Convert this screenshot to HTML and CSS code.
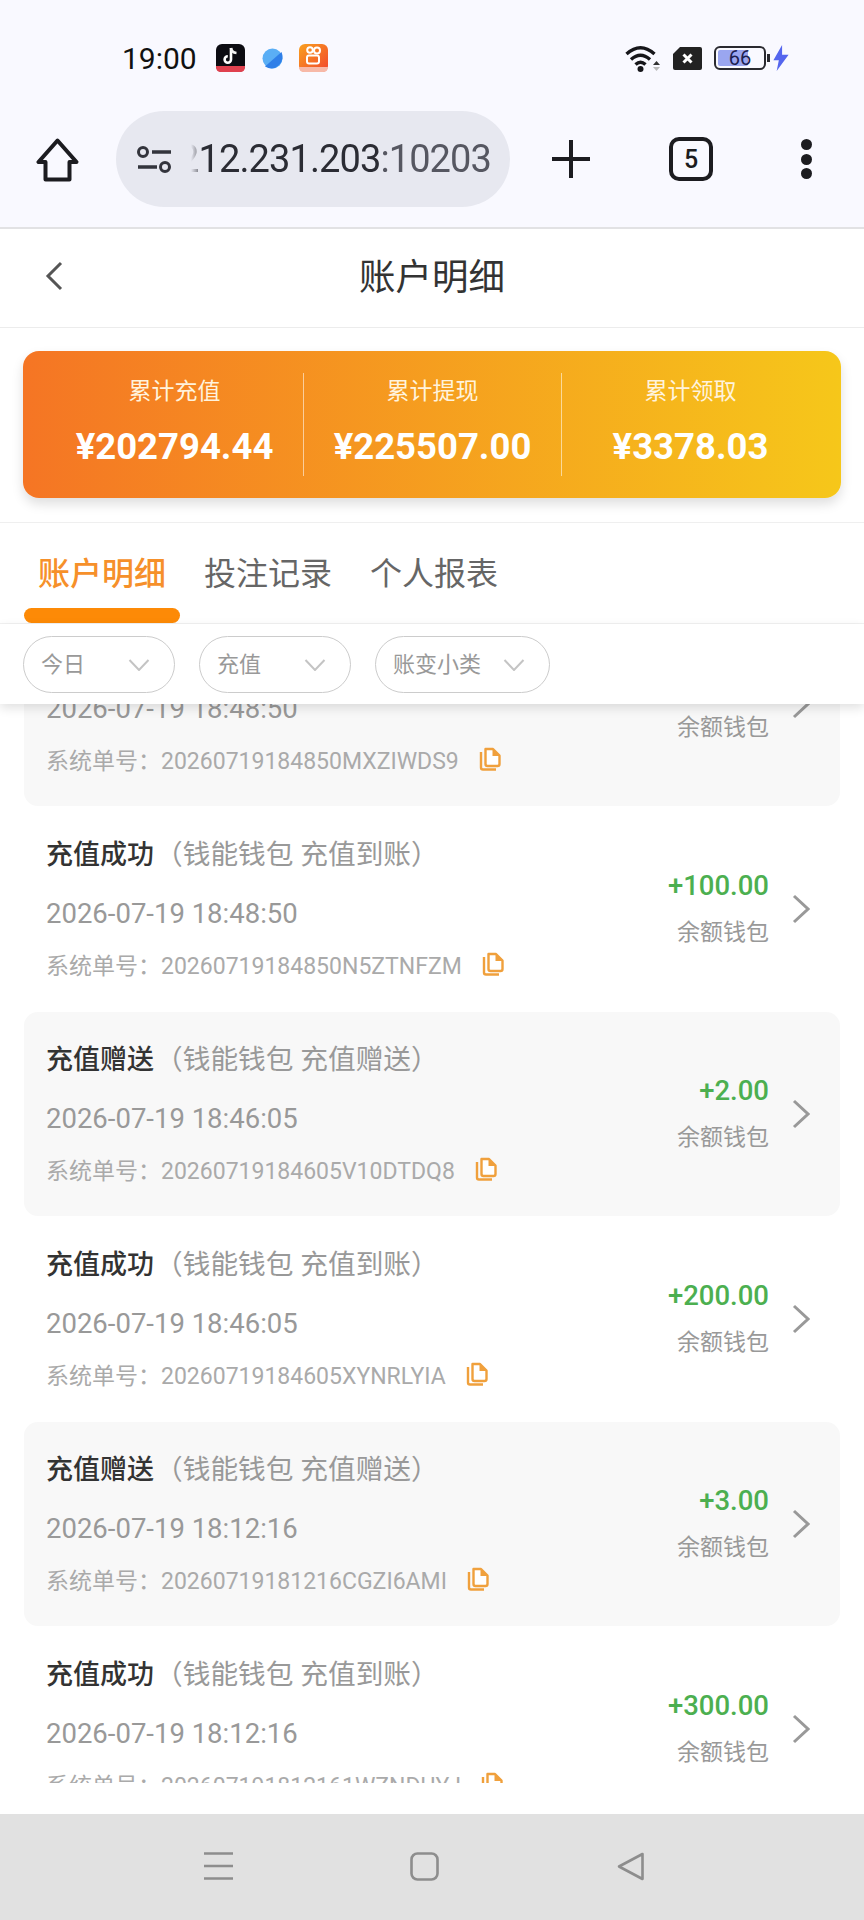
FILE: index.html
```html
<!DOCTYPE html>
<html lang="zh-CN">
<head>
<meta charset="UTF-8">
<meta name="viewport" content="width=device-width, initial-scale=1.0">
<title>账户明细</title>
<link rel="stylesheet" href="styles.css">
</head>
<body>
  <svg class="defs" width="0" height="0">
    <symbol id="copy" viewBox="0 0 22 24">
      <path d="M2 5v15.500q0 2 2 2h13" fill="none" stroke="#f0a03c" stroke-width="2.400"/>
      <path d="M6.500 2h7.500l6.500 6.500v8.500q0 2-2 2h-10q-2 0-2-2z" fill="#fff" stroke="#f0a03c" stroke-width="2.400" stroke-linejoin="round"/>
      <path d="M13.500 1.500v7.500h7.500z" fill="#f0a03c"/>
    </symbol>
    <symbol id="next" viewBox="0 0 18 30">
      <path d="M2 2l14 13L2 28" fill="none" stroke="#999" stroke-width="3"/>
    </symbol>
    <symbol id="drop" viewBox="0 0 22 12">
      <path d="M1.500 1l9.500 10 9.500-10" fill="none" stroke="#c4c4c4" stroke-width="2"/>
    </symbol>
  </svg>

  <div class="app">
    <div class="chrome">
      <div class="status">
        <span class="time">19:00</span>
        <svg class="app-tiktok" width="29" height="28" viewBox="0 0 29 28">
          <rect width="29" height="28" rx="6" fill="#0c0c12"/>
          <path d="M0 22h29v1q0 5-5 5H5q-5 0-5-5z" fill="#e0414f"/>
          <path d="M15 4v11.500a3.200 3.200 0 1 1-3.200-3.200" fill="none" stroke="#fff" stroke-width="2.600"/>
          <path d="M15 4q.5 4.500 5.500 5" fill="none" stroke="#f3f3f3" stroke-width="2.600"/>
        </svg>
        <svg class="app-sphere" width="21" height="21" viewBox="0 0 21 21">
          <circle cx="10.500" cy="10.500" r="10" fill="#5aaef5"/>
          <path d="M3 18.500L19.500 4q3 8-3 13.500t-13.500 1z" fill="#2f7fe8"/>
        </svg>
        <svg class="app-kwai" width="29" height="28" viewBox="0 0 29 28">
          <defs>
            <linearGradient id="kwai" x1="0" y1="0" x2="1" y2="1">
              <stop offset="0" stop-color="#f9a11f"/>
              <stop offset="1" stop-color="#f2452d"/>
            </linearGradient>
          </defs>
          <rect width="29" height="28" rx="6" fill="url(#kwai)"/>
          <circle cx="11" cy="6" r="2.800" fill="none" stroke="#fff" stroke-width="2"/>
          <circle cx="18" cy="6.500" r="3" fill="none" stroke="#fff" stroke-width="2"/>
          <rect x="8" y="11.500" width="12" height="8" rx="2" fill="none" stroke="#fff" stroke-width="2"/>
          <path d="M0 23h29q0 5-5 5H5q-5 0-5-5z" fill="#f7b9a8"/>
        </svg>
        <div class="status-right">
          <svg width="36" height="27" viewBox="0 0 36 27">
            <path d="M1.500 9q14-12.500 28 0M6 14.500q9.500-8.500 19 0M10.500 19.500q5-4.500 10 0" fill="none" stroke="#16161a" stroke-width="3.400"/>
            <circle cx="15.500" cy="24" r="3" fill="#16161a"/>
            <path d="M28 20l3.500-4 3.500 4z" fill="#333"/>
            <path d="M28 22l3.500 4 3.500-4z" fill="#bbb"/>
          </svg>
          <svg width="29" height="23" viewBox="0 0 29 23">
            <path d="M7 0h20q2 0 2 2v19q0 2-2 2H2q-2 0-2-2V7z" fill="#222"/>
            <path d="M10.500 7.500l8 8m0-8l-8 8" stroke="#fff" stroke-width="3"/>
          </svg>
          <div class="battery">
            <span class="battery-level"></span>
            <span class="battery-num">66</span>
          </div>
          <svg class="bolt" width="18" height="26" viewBox="0 0 16 24">
            <path d="M9 0L1 14h5l-2 10 11-15H9z" fill="#5566ee"/>
          </svg>
        </div>
      </div>
      <div class="toolbar">
        <svg class="tool-home" width="43" height="44" viewBox="0 0 43 44">
          <path d="M21.500 2.500L2.500 24h7v17.500h24V24h7z" fill="none" stroke="#1c1c20" stroke-width="4" stroke-linejoin="round"/>
        </svg>
        <div class="address">
          <svg width="37" height="29" viewBox="0 0 37 29">
            <circle cx="7" cy="7" r="4.500" fill="none" stroke="#33343c" stroke-width="3"/>
            <path d="M16 7h19M2 22h19" stroke="#33343c" stroke-width="3.500"/>
            <circle cx="29" cy="22" r="4.500" fill="none" stroke="#33343c" stroke-width="3"/>
          </svg>
          <div class="url"><span class="url-host">212.231.203</span><span class="url-port">:10203</span></div>
        </div>
        <svg class="tool-plus" width="38" height="38" viewBox="0 0 38 38">
          <path d="M19 0v38M0 19h38" stroke="#1c1c20" stroke-width="4"/>
        </svg>
        <div class="tabcount">5</div>
        <div class="dots"><i></i><i></i><i></i></div>
      </div>
    </div>

    <div class="header">
      <svg class="back" width="18" height="30" viewBox="0 0 18 30">
        <path d="M16 2L3 15l13 13" fill="none" stroke="#555" stroke-width="3"/>
      </svg>
      <h1>账户明细</h1>
    </div>

    <div class="summary-wrap">
      <div class="summary">
        <div class="stat">
          <span class="stat-label">累计充值</span>
          <span class="stat-value">¥202794.44</span>
        </div>
        <div class="stat">
          <span class="stat-label">累计提现</span>
          <span class="stat-value">¥225507.00</span>
        </div>
        <div class="stat">
          <span class="stat-label">累计领取</span>
          <span class="stat-value">¥3378.03</span>
        </div>
      </div>
    </div>

    <div class="tabs">
      <div class="tab active"><span class="tab-label">账户明细</span><span class="tab-bar"></span></div>
      <div class="tab"><span class="tab-label">投注记录</span><span class="tab-bar"></span></div>
      <div class="tab"><span class="tab-label">个人报表</span><span class="tab-bar"></span></div>
    </div>

    <div class="filters">
      <div class="pill"><span>今日</span><svg width="22" height="12"><use href="#drop"/></svg></div>
      <div class="pill"><span>充值</span><svg width="22" height="12"><use href="#drop"/></svg></div>
      <div class="pill"><span>账变小类</span><svg width="22" height="12"><use href="#drop"/></svg></div>
    </div>

    <div class="list">
      <!-- scrolled row: its title and amount are out of view behind the filters -->
      <div class="row grey first">
        <div class="row-main">
          <div class="row-date">2026-07-19 18:48:50</div>
          <div class="row-no">系统单号：20260719184850MXZIWDS9<svg width="22" height="24"><use href="#copy"/></svg></div>
        </div>
        <div class="row-side"><span class="wallet">余额钱包</span></div>
        <svg class="row-next" width="18" height="30"><use href="#next"/></svg>
      </div>
      <div class="row">
        <div class="row-main">
          <div class="row-title"><b>充值成功</b><span class="row-sub">（钱能钱包 充值到账）</span></div>
          <div class="row-date">2026-07-19 18:48:50</div>
          <div class="row-no">系统单号：20260719184850N5ZTNFZM<svg width="22" height="24"><use href="#copy"/></svg></div>
        </div>
        <div class="row-side"><span class="amount">+100.00</span><span class="wallet">余额钱包</span></div>
        <svg class="row-next" width="18" height="30"><use href="#next"/></svg>
      </div>
      <div class="row grey">
        <div class="row-main">
          <div class="row-title"><b>充值赠送</b><span class="row-sub">（钱能钱包 充值赠送）</span></div>
          <div class="row-date">2026-07-19 18:46:05</div>
          <div class="row-no">系统单号：20260719184605V10DTDQ8<svg width="22" height="24"><use href="#copy"/></svg></div>
        </div>
        <div class="row-side"><span class="amount">+2.00</span><span class="wallet">余额钱包</span></div>
        <svg class="row-next" width="18" height="30"><use href="#next"/></svg>
      </div>
      <div class="row">
        <div class="row-main">
          <div class="row-title"><b>充值成功</b><span class="row-sub">（钱能钱包 充值到账）</span></div>
          <div class="row-date">2026-07-19 18:46:05</div>
          <div class="row-no">系统单号：20260719184605XYNRLYIA<svg width="22" height="24"><use href="#copy"/></svg></div>
        </div>
        <div class="row-side"><span class="amount">+200.00</span><span class="wallet">余额钱包</span></div>
        <svg class="row-next" width="18" height="30"><use href="#next"/></svg>
      </div>
      <div class="row grey">
        <div class="row-main">
          <div class="row-title"><b>充值赠送</b><span class="row-sub">（钱能钱包 充值赠送）</span></div>
          <div class="row-date">2026-07-19 18:12:16</div>
          <div class="row-no">系统单号：20260719181216CGZI6AMI<svg width="22" height="24"><use href="#copy"/></svg></div>
        </div>
        <div class="row-side"><span class="amount">+3.00</span><span class="wallet">余额钱包</span></div>
        <svg class="row-next" width="18" height="30"><use href="#next"/></svg>
      </div>
      <div class="row">
        <div class="row-main">
          <div class="row-title"><b>充值成功</b><span class="row-sub">（钱能钱包 充值到账）</span></div>
          <div class="row-date">2026-07-19 18:12:16</div>
          <div class="row-no">系统单号：202607191812161WZNDUYJ<svg width="22" height="24"><use href="#copy"/></svg></div>
        </div>
        <div class="row-side"><span class="amount">+300.00</span><span class="wallet">余额钱包</span></div>
        <svg class="row-next" width="18" height="30"><use href="#next"/></svg>
      </div>
    </div>

    <div class="navbar">
      <svg width="29" height="28" viewBox="0 0 29 28">
        <path d="M0 1.500h29M0 14h29M0 26.500h29" stroke="#8d8d8d" stroke-width="2.600"/>
      </svg>
      <svg width="29" height="29" viewBox="0 0 29 29">
        <rect x="1.500" y="1.500" width="26" height="26" rx="6" fill="none" stroke="#8d8d8d" stroke-width="2.600"/>
      </svg>
      <svg width="29" height="29" viewBox="0 0 29 29">
        <path d="M26.500 2L3 14.500 26.500 27z" fill="none" stroke="#8d8d8d" stroke-width="2.600" stroke-linejoin="round"/>
      </svg>
    </div>
  </div>
</body>
</html>
```

FILE: styles.css
```css
* {
  box-sizing: border-box;
}

body {
  margin: 0;
  background-color: #fff;
  font-family: Roboto, "Noto Sans CJK SC", sans-serif;
}

.defs {
  display: block;
  height: 0;
}

.app {
  display: flex;
  flex-direction: column;
  height: 1920px;
  overflow: hidden;
}

/* phone status bar + browser toolbar */
.chrome {
  height: 229px;
  background-color: #f9f9ff;
  border-bottom: 2px solid #e2e2e4;
}

.status {
  display: flex;
  align-items: center;
  height: 111px;
  padding: 5px 74px 0 122px;
}

.time {
  font-size: 30px;
  color: #111;
  margin-right: 19px;
}

.app-sphere {
  margin: 0 16px 0 17px;
}

.status-right {
  display: flex;
  align-items: center;
  margin-left: auto;
}

.status-right > svg {
  margin-right: 12px;
}

.status-right > .bolt {
  margin: 0;
}

.battery {
  position: relative;
  width: 52px;
  height: 24px;
  margin-right: 6px;
  border: 2px solid #2a2a30;
  border-radius: 6px;
  display: flex;
  align-items: center;
  justify-content: center;
  font-size: 20px;
  color: #1c2050;
}

.battery::after {
  content: "";
  position: absolute;
  right: -6px;
  top: 6px;
  width: 3px;
  height: 8px;
  background-color: #2a2a30;
}

.battery-level {
  position: absolute;
  left: 2px;
  top: 2px;
  bottom: 2px;
  width: 30px;
  background-color: #9aa6f0;
  border-radius: 2px;
}

.battery-num {
  position: relative;
}

.toolbar {
  display: flex;
  align-items: flex-start;
  height: 116px;
  padding-left: 36px;
}

.tool-home {
  margin: 27px 37px 0 0;
}

.address {
  display: flex;
  align-items: center;
  width: 394px;
  height: 96px;
  padding: 0 19px 0 20px;
  background-color: #e7e8f0;
  border-radius: 48px;
}

.url {
  flex: 1;
  display: flex;
  justify-content: flex-end;
  overflow: hidden;
  margin-left: 8px;
  font-size: 38px;
  letter-spacing: -0.9px;
  white-space: nowrap;
  -webkit-mask-image: linear-gradient(to right, transparent 10px, rgba(0, 0, 0, 0.4) 16px, #000 20px);
  mask-image: linear-gradient(to right, transparent 10px, rgba(0, 0, 0, 0.4) 16px, #000 20px);
}

.url-host {
  color: #2b2c34;
}

.url-port {
  color: #565761;
}

.tool-plus {
  margin: 29px 0 0 42px;
}

.tabcount {
  display: flex;
  align-items: center;
  justify-content: center;
  width: 44px;
  height: 44px;
  margin: 26px 0 0 79px;
  border: 4px solid #1c1c20;
  border-radius: 10px;
  font-size: 25px;
  font-weight: 500;
  color: #1c1c20;
}

.dots {
  display: flex;
  flex-direction: column;
  gap: 3.500px;
  margin: 28px 0 0 88px;
}

.dots i {
  display: block;
  width: 11px;
  height: 11px;
  border-radius: 50%;
  background-color: #1c1c20;
}

/* page header */
.header {
  display: flex;
  align-items: center;
  justify-content: center;
  position: relative;
  height: 99px;
  padding-bottom: 8px;
  border-bottom: 1px solid #ececec;
}

.header h1 {
  margin: 0;
  font-size: 36.500px;
  font-weight: 400;
  color: #333;
}

.back {
  position: absolute;
  left: 45px;
  top: 32px;
}

.summary-wrap {
  padding: 23px 23px 24px;
  border-bottom: 1px solid #efefef;
}

.summary {
  display: flex;
  align-items: center;
  height: 147px;
  padding: 0 22px 0 23px;
  border-radius: 16px;
  background: linear-gradient(to right, #f57524, #f6c71a);
  box-shadow: 0 6px 12px rgba(0, 0, 0, 0.13);
}

.stat {
  flex: 1;
  display: flex;
  flex-direction: column;
  align-items: center;
  justify-content: center;
  gap: 19px;
  height: 103px;
  padding-bottom: 5px;
  color: #fff;
  border-left: 1px solid rgba(255, 255, 255, 0.55);
}

.stat:first-child {
  border-left: 0;
}

.stat-label {
  font-size: 23px;
  line-height: 30px;
  color: #fff3dd;
}

.stat-value {
  font-size: 36.500px;
  line-height: 42px;
  font-weight: 700;
}

/* tabs */
.tabs {
  display: flex;
  gap: 10px;
  height: 101px;
  padding: 0 24px;
  border-bottom: 1px solid #f2f2f2;
}

.tab {
  display: flex;
  flex-direction: column;
  padding: 10px 14px 0;
  font-size: 32px;
  color: #666;
}

.tab-label {
  flex: 1;
  display: flex;
  align-items: center;
}

.tab-bar {
  height: 15px;
  margin: 0 -14px;
  border-radius: 8px;
}

.tab.active {
  color: #f6902a;
  font-weight: 500;
}

.tab.active .tab-bar {
  background-color: #fd8a06;
}

/* filter pills */
.filters {
  position: relative;
  z-index: 1;
  display: flex;
  gap: 24px;
  height: 80px;
  padding: 12px 23px 0;
  background-color: #fff;
  box-shadow: 0 4px 10px rgba(0, 0, 0, 0.12);
}

.pill {
  display: flex;
  align-items: center;
  justify-content: space-between;
  gap: 22px;
  min-width: 152px;
  height: 57px;
  padding: 0 24px 0 17px;
  border: 1.500px solid #ccc;
  border-radius: 29px;
  font-size: 22px;
  color: #999;
}

.pill span {
  padding-bottom: 5px;
}

/* transaction list */
.list {
  flex: 1;
  overflow: hidden;
  margin-bottom: 31px;
  padding: 0 24px;
}

.row {
  display: flex;
  align-items: center;
  height: 204px;
  margin-bottom: 1px;
  padding: 0 30px 0 22px;
  border-radius: 14px;
}

.row.first {
  margin-top: -102px;
}

.row.grey {
  background-color: #f8f8f8;
}

.row-main {
  flex: 1;
  align-self: flex-start;
  display: flex;
  flex-direction: column;
  padding-top: 28px;
}

.first .row-main {
  padding-top: 68px;
}

.first .row-side {
  padding-top: 48px;
}

.row-title {
  font-size: 27px;
  line-height: 40px;
  color: #999;
}

.row-title b {
  font-weight: 500;
  color: #333;
}

.row-sub {
  font-size: 27.700px;
  margin-left: 1px;
}

.row-date {
  margin-top: 19px;
  font-size: 27.500px;
  line-height: 40px;
  color: #999;
}

.row-no {
  display: flex;
  align-items: center;
  gap: 20px;
  height: 30px;
  margin-top: 15px;
  font-size: 23px;
  color: #aaa;
}

.row-side {
  display: flex;
  flex-direction: column;
  align-items: flex-end;
  gap: 14px;
}

.amount {
  font-size: 27.500px;
  line-height: 34px;
  font-weight: 500;
  color: #4caf50;
}

.wallet {
  font-size: 23px;
  line-height: 32px;
  color: #999;
}

.row-next {
  margin-left: 23px;
}

/* phone nav bar */
.navbar {
  display: flex;
  align-items: center;
  justify-content: center;
  gap: 177px;
  height: 106px;
  padding: 0 16px 2px 0;
  background-color: #e1e1e1;
}
```
